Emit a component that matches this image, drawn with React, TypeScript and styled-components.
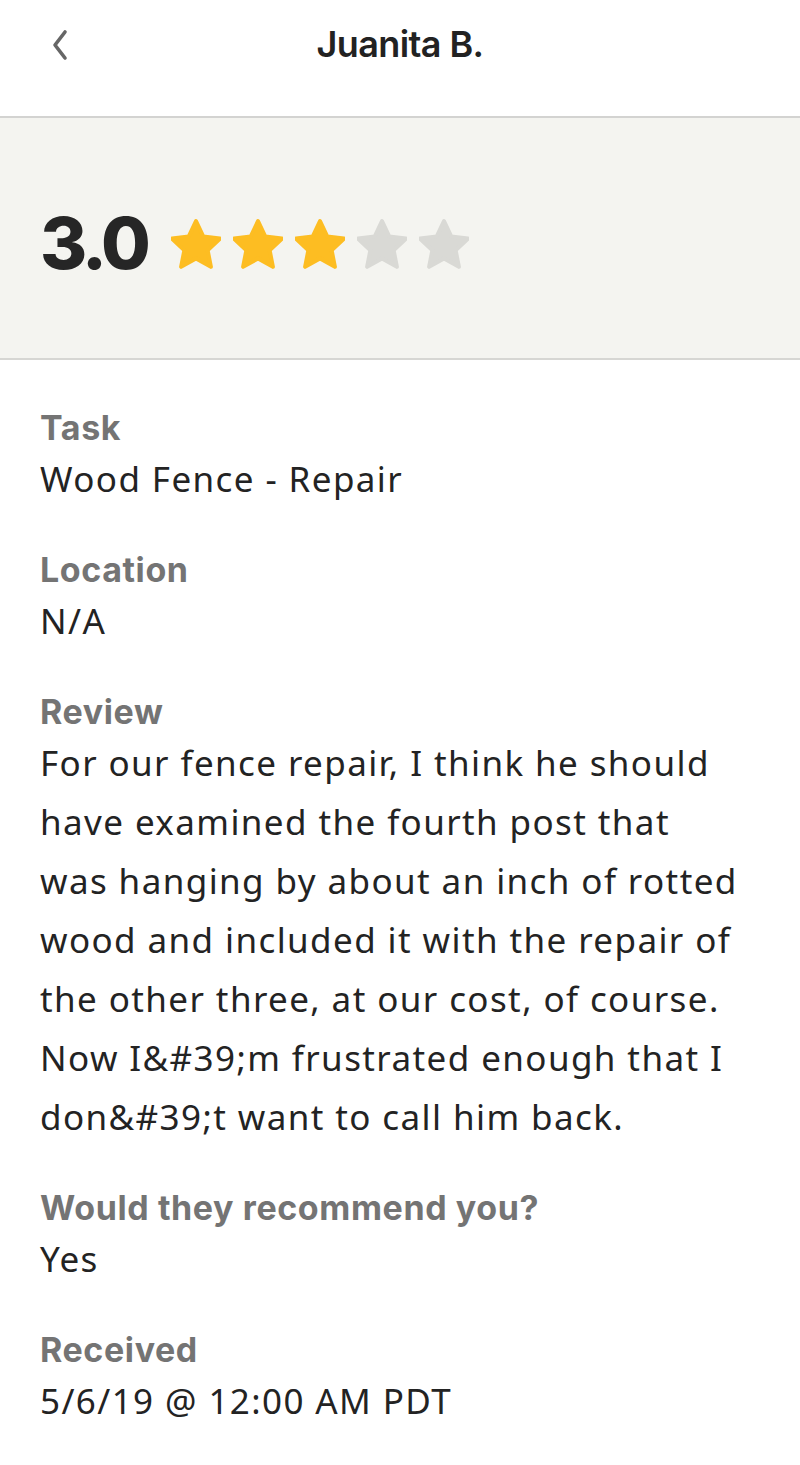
import React from "react";
import styled, { createGlobalStyle } from "styled-components";

const GlobalStyle = createGlobalStyle`
  html, body {
    margin: 0;
    padding: 0;
    background: #ffffff;
  }
  body {
    font-family: "Noto Sans", "Liberation Sans", sans-serif;
    -webkit-font-smoothing: antialiased;
  }
`;

const Page = styled.div`
  width: 800px;
  min-height: 1465px;
  background: #ffffff;
`;

const Header = styled.header`
  height: 116px;
  display: grid;
  grid-template-columns: 120px 1fr 120px;
  align-items: start;
  border-bottom: 2px solid #d3d3d1;
`;

const BackButton = styled.button`
  border: 0;
  background: none;
  padding: 0;
  margin: 27px 0 0 44px;
  width: 32px;
  height: 36px;
  display: flex;
  align-items: center;
  justify-content: center;
  color: #666666;
  cursor: pointer;
`;

const Title = styled.h1`
  margin: 22px 0 0;
  text-align: center;
  font-family: "Inter", "Liberation Sans", sans-serif;
  font-size: 36px;
  line-height: 44px;
  font-weight: 600;
  letter-spacing: -0.6px;
  color: #222222;
`;

const RatingBand = styled.section`
  height: 242px;
  background: #f4f4f0;
  border-bottom: 2px solid #d6d6d3;
  display: flex;
  align-items: center;
  gap: 22px;
  padding: 10px 40px 0;
  box-sizing: border-box;
`;

const Score = styled.span`
  font-family: "Inter", "Liberation Sans", sans-serif;
  font-size: 72px;
  font-weight: 800;
  letter-spacing: -4px;
  color: #262626;
  line-height: 1;
`;

const Stars = styled.div`
  display: flex;
  gap: 12px;
  margin: 2px 0 0 2px;
`;

const Details = styled.dl`
  margin: 0;
  padding: 47px 60px 0 40px;
  display: flex;
  flex-direction: column;
  gap: 41px;
`;

const Field = styled.div`
  display: flex;
  flex-direction: column;
`;

const Label = styled.dt`
  font-family: "Inter", "Liberation Sans", sans-serif;
  font-size: 34px;
  line-height: 42px;
  font-weight: 700;
  letter-spacing: 0.6px;
  color: #747474;
  white-space: nowrap;
`;

const Value = styled.dd`
  margin: 0;
  font-size: 35px;
  line-height: 59px;
  font-weight: 400;
  color: #232323;
  letter-spacing: 1.4px;
`;

const Star = ({ filled }: { filled: boolean }) => (
  <svg width="50" height="50" viewBox="2.1 1.4 19.8 19.7">
    <path
      d="M12 2.2l2.9 6.1 6.6.8-4.9 4.6 1.3 6.6L12 17l-5.9 3.3 1.3-6.6-4.9-4.6 6.6-.8z"
      fill={filled ? "#fdbd22" : "#d9d9d5"}
      stroke={filled ? "#fdbd22" : "#d9d9d5"}
      strokeWidth="1.6"
      strokeLinejoin="round"
    />
  </svg>
);

const fields = [
  { label: "Task", value: "Wood Fence - Repair" },
  { label: "Location", value: "N/A" },
  {
    label: "Review",
    value:
      "For our fence repair, I think he should have examined the fourth post that was hanging by about an inch of rotted wood and included it with the repair of the other three, at our cost, of course. Now I&#39;m frustrated enough that I don&#39;t want to call him back.",
  },
  { label: "Would they recommend you?", value: "Yes" },
  { label: "Received", value: "5/6/19 @ 12:00 AM PDT" },
];

export default function App() {
  const rating = 3;
  return (
    <Page>
      <GlobalStyle />
      <Header>
        <BackButton aria-label="Back">
          <svg width="18" height="32" viewBox="0 0 18 32">
            <path
              d="M14 3L4 16l10 13"
              fill="none"
              stroke="#666666"
              strokeWidth="3.6"
              strokeLinecap="round"
              strokeLinejoin="round"
            />
          </svg>
        </BackButton>
        <Title>Juanita B.</Title>
        <div />
      </Header>
      <RatingBand>
        <Score>3.0</Score>
        <Stars>
          {[1, 2, 3, 4, 5].map((n) => (
            <Star key={n} filled={n <= rating} />
          ))}
        </Stars>
      </RatingBand>
      <Details>
        {fields.map((f) => (
          <Field key={f.label}>
            <Label>{f.label}</Label>
            <Value>{f.value}</Value>
          </Field>
        ))}
      </Details>
    </Page>
  );
}
